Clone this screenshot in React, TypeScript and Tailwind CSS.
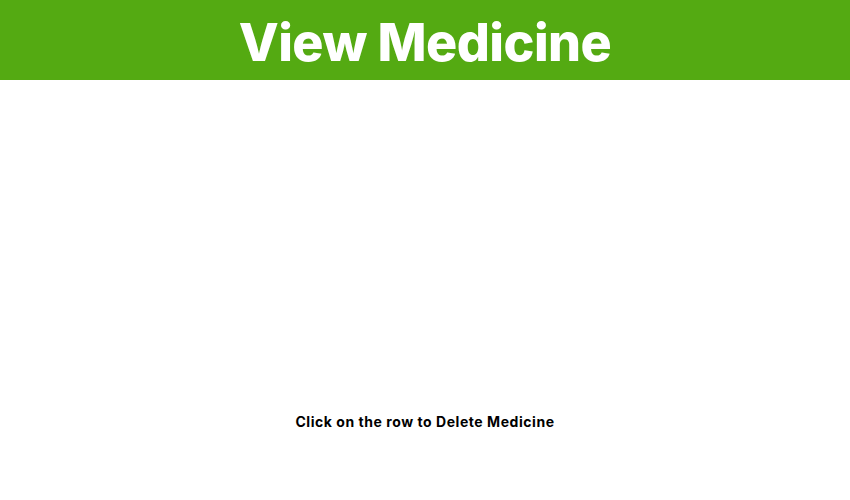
import React from 'react';

const App: React.FC = () => {
  return (
    <div className="min-h-screen bg-white font-['Inter',sans-serif]">
      {/* Header */}
      <header className="h-20 bg-[#54aa12] flex items-center justify-center pt-[6px]">
        <h1 className="text-white text-[52px] font-extrabold tracking-[-0.55px] leading-none">View Medicine</h1>
      </header>

      {/* Table area (empty) */}
      <main className="h-[332px]"></main>

      <p className="text-center text-[14px] font-bold text-black leading-5 tracking-[0.55px]">
        Click on the row to Delete Medicine
      </p>
    </div>
  );
};

export default App;
